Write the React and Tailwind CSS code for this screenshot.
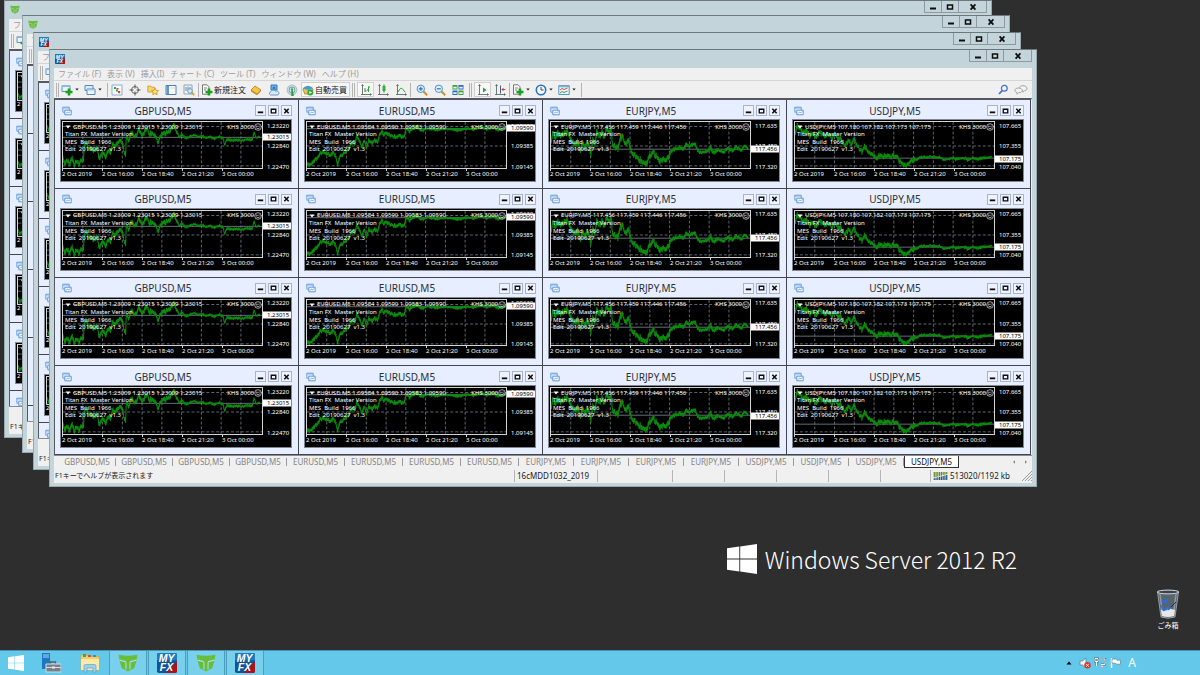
import React from "react";

const MARKETS = [
  {
    name: "GBPUSD,M5",
    ohlc: "1.23009 1.23015 1.23009 1.23015",
    axis: ["1.23220", "1.22840", "1.22470"],
    bid: "1.23015",
    bidY: 48,
    origin: 38,
    points:
      "38,170 42,195 50,180 57,193 66,175 72,198 80,182 86,195 92,178 100,180 104,130 108,120 116,150 124,140 132,155 140,145 150,178 156,160 163,165 168,170 174,150 182,155 190,130 196,140 204,125 212,120 220,130 224,160 228,162 230,110 238,120 246,95 254,105 262,100 268,85 276,105 284,95 292,82 300,100 310,95 320,110 328,128 334,105 344,100 352,95 362,90 370,78 376,70 382,90 390,107 400,103 412,112 424,107 436,102 448,108 460,105 472,112 484,108 496,115 510,108 524,112 528,135 536,115 550,120 564,118 580,120 596,116 612,118 618,95 624,112 635,108",
    noise: [10, 3],
  },
  {
    name: "EURUSD,M5",
    ohlc: "1.09584 1.09590 1.09583 1.09590",
    axis: ["1.09630", "1.09385", "1.09145"],
    bid: "1.09590",
    bidY: 21,
    origin: 34,
    points:
      "34,190 40,197 50,190 58,180 66,175 74,160 84,155 95,160 104,165 114,158 122,170 127,200 132,175 140,165 150,158 160,150 166,130 172,125 180,128 186,105 192,120 200,138 208,120 214,140 222,118 230,128 240,120 248,125 254,100 262,90 266,105 276,95 286,105 300,108 316,105 328,112 334,85 346,90 358,80 370,76 380,88 400,82 430,86 460,83 490,88 520,83 545,85 560,76 580,84 600,78 615,88 636,80",
    noise: [8, 3],
  },
  {
    name: "EURJPY,M5",
    ohlc: "117.456 117.459 117.446 117.456",
    axis: ["117.635", "117.480", "117.320"],
    bid: "117.456",
    bidY: 85,
    origin: 29,
    points:
      "30,120 34,100 42,110 50,95 58,105 68,100 78,90 86,105 94,125 102,130 110,125 118,150 124,130 134,140 142,125 150,165 156,120 162,130 168,90 176,105 184,95 192,110 198,80 206,95 212,85 216,130 224,140 232,145 238,120 246,105 254,128 264,120 272,155 282,165 290,175 298,180 308,185 316,197 324,180 332,165 340,158 350,170 360,185 370,178 380,180 390,160 400,148 410,145 420,140 430,145 440,132 450,138 464,128 474,150 484,160 496,155 510,150 514,140 522,160 536,148 550,158 564,145 580,150 592,140 605,150 618,138 628,148",
    noise: [12, 8],
  },
  {
    name: "USDJPY,M5",
    ohlc: "107.180 107.182 107.173 107.175",
    axis: ["107.665", "107.355", "107.040"],
    bid: "107.175",
    bidY: 113,
    origin: 25,
    points:
      "26,95 32,75 40,80 50,95 60,90 70,105 80,95 90,110 98,90 106,100 116,105 126,100 136,115 146,100 154,115 162,108 170,125 178,135 186,120 196,130 204,115 212,130 220,145 228,155 236,140 246,152 256,160 266,172 272,175 280,168 292,170 304,165 314,172 324,168 334,172 344,185 354,195 364,198 374,185 384,180 396,180 406,170 420,172 436,170 450,172 464,172 480,182 500,175 520,178 536,174 550,180 566,175 580,178 600,173 614,174 624,170",
    noise: [10, 4],
  },
];

const TIMES = ["2 Oct 2019", "2 Oct 16:00", "2 Oct 18:40", "2 Oct 21:20", "3 Oct 00:00"];
const MENUS = ["ファイル (F)", "表示 (V)", "挿入(I)", "チャート (C)", "ツール (T)", "ウィンドウ (W)", "ヘルプ (H)"];

// Interpolates between price anchors and adds a repeatable jitter per bar.
function buildPath(market) {
  const anchors = market.points.split(" ").map((p) => p.split(",").map(Number));
  let seed = 17;
  const random = () => {
    seed = (seed * 1103515245 + 12345) % 2147483648;
    return seed / 2147483648 - 0.5;
  };
  let d = "";
  for (let i = 0; i < anchors.length - 1; i++) {
    const [x0, y0] = anchors[i];
    const [x1, y1] = anchors[i + 1];
    for (let x = x0; x < x1; x += 2) {
      const y = y0 + ((y1 - y0) * (x - x0)) / (x1 - x0);
      const amp = x < 390 ? market.noise[0] : market.noise[1];
      const n = random() * amp;
      d += `${d ? "L" : "M"}${x - market.origin} ${(y - 62 + n - amp / 2).toFixed(1)}V${(y - 62 + n + amp / 2).toFixed(1)}`;
    }
  }
  return d;
}
const PATHS = MARKETS.map(buildPath);

function Plot({ index }) {
  const m = MARKETS[index];
  return (
    <svg viewBox="0 0 604 143" preserveAspectRatio="none" className="block h-full w-full" aria-hidden="true">
      {[14, 75, 137].map((y) => (
        <path key={y} d={`M0 ${y}H604`} stroke="#76828e" strokeWidth="2.4" strokeDasharray="9 6" />
      ))}
      {[60, 120, 180, 240, 300, 360, 420, 480, 540].map((x) => (
        <path key={x} d={`M${x} 0V143`} stroke="#76828e" strokeWidth="2.4" strokeDasharray="9 6" />
      ))}
      <path d={`M0 ${m.bidY}H604`} stroke="#7c8894" strokeWidth="2.5" />
      <path d={PATHS[index]} fill="none" stroke="#088c0a" strokeWidth="3.2" />
    </svg>
  );
}

function Smile() {
  return (
    <svg viewBox="0 0 8 8" className="h-2 w-2" fill="none" stroke="#e8e8e8" strokeWidth="0.7" aria-hidden="true">
      <circle cx="4" cy="4" r="3.3" />
      <path d="M2.2 4.8Q4 6.6 5.8 4.8M2.8 2.5v1M5.2 2.5v1" />
    </svg>
  );
}

function Caret({ className = "h-1 w-1.5" }) {
  return (
    <svg viewBox="0 0 6 4" className={className} fill="currentColor" aria-hidden="true">
      <path d="M0.5 0.5h5L3 3.5z" />
    </svg>
  );
}

function ChartGlyph() {
  return (
    <svg viewBox="0 0 10 10" className="h-2.5 w-2.5" aria-hidden="true">
      <path d="M0.8 1.2h6.4v5H0.8z" fill="#dcebff" stroke="#6fa3dd" />
      <path d="M0.5 1h7v1.4h-7z" fill="#7fb0e6" />
      <path d="M2.8 4.2h6.4v4.6H2.8z" fill="#fff" stroke="#5e98d8" />
      <path d="M4 7.6l1.5-1.6 1.2 1 1.5-1.6" fill="none" stroke="#5e98d8" strokeWidth="0.9" />
    </svg>
  );
}

function CtlGlyph({ kind }) {
  return (
    <svg viewBox="0 0 10 10" className="h-2.5 w-2.5" fill="none" stroke="#0c0c0c" aria-hidden="true">
      {kind === "min" && <path d="M2 6.5h6" strokeWidth="2" />}
      {kind === "max" && <path d="M2.5 3h5v4h-5zM2 3h6" strokeWidth="1.5" />}
      {kind === "close" && <path d="M2.6 2.4l4.8 5.2M7.4 2.4L2.6 7.6" strokeWidth="1.7" />}
    </svg>
  );
}

const CONTROL_NAMES = [
  ["min", "最小化"],
  ["max", "最大化"],
  ["close", "閉じる"],
];

function ChartWindow({ index }) {
  const m = MARKETS[index];
  return (
    <section className="flex min-h-0 min-w-0 flex-col overflow-hidden border-r border-b border-[#44464f] bg-[#e6eeff] pr-1.5 pb-1.5 pl-[5px] font-['Noto_Sans','Open_Sans',sans-serif]">
      <header className="grid h-[19px] shrink-0 grid-cols-[12px_1fr_38px] items-center pt-0.5">
        <span className="pl-0.5">
          <ChartGlyph />
        </span>
        <h2 className="text-center text-[10px] leading-3 text-[#2c2f38]">{m.name}</h2>
        <span className="flex justify-end gap-0.5">
          {CONTROL_NAMES.map(([kind, label]) => (
            <button
              key={kind}
              aria-label={`${m.name} ${label}`}
              className="flex h-[11px] w-[11px] items-center justify-center border border-[#a9b3cb] bg-[#eef3ff]"
            >
              <CtlGlyph kind={kind} />
            </button>
          ))}
        </span>
      </header>
      <div className="flex min-h-0 flex-1 flex-col border border-[#808790] bg-black text-[6px] leading-[7px] text-white">
        <div className="flex min-h-0 flex-1 pt-px pl-px">
          <div className="relative flex-1 border border-[#d4d4d4]">
            <div className="absolute inset-0">
              <Plot index={index} />
            </div>
            <div className="relative flex flex-col pt-px pl-0.5">
              <p className="flex items-center gap-0.5 whitespace-pre">
                <Caret className="h-1 w-1.5" />
                <span className="flex-1">
                  {m.name} {m.ohlc}
                </span>
                <span>KHS 3000</span>
                <span className="-ml-0.5">
                  <Smile />
                </span>
              </p>
              <p className="whitespace-pre">Titan FX  Master Version</p>
              <p className="whitespace-pre pt-px">MES  Build  1966</p>
              <p className="whitespace-pre">Edit  20190627  v1.3</p>
            </div>
          </div>
          <div className="relative w-7 shrink-0">
            {m.axis.map((price, i) => (
              <span
                key={price}
                className="absolute left-1 -translate-y-1/2"
                style={{ top: `${([14, 75, 137][i] / 143) * 100}%` }}
              >
                {price}
              </span>
            ))}
            <span
              className="absolute left-0 w-full -translate-y-1/2 bg-white pl-1 text-black"
              style={{ top: `${(m.bidY / 143) * 100}%` }}
            >
              {m.bid}
            </span>
          </div>
        </div>
        <ol className="flex h-3 shrink-0 pr-7 pl-px">
          {TIMES.map((t) => (
            <li key={t} className="w-10 shrink-0 whitespace-nowrap">
              <span className="block h-0.5 w-px bg-[#d4d4d4]" />
              {t}
            </li>
          ))}
        </ol>
      </div>
    </section>
  );
}

// Edge of a chart in a terminal that lies behind another one.
function ChartEdge() {
  return (
    <section className="col-start-1 flex flex-col border-r border-b border-[#44464f] bg-[#e6eeff] pr-1.5 pb-1.5 pl-[5px] font-['Noto_Sans','Open_Sans',sans-serif]">
      <header className="flex h-[19px] shrink-0 items-center pt-0.5 pl-px">
        <ChartGlyph />
      </header>
      <div className="flex min-h-0 flex-1 flex-col border border-[#808790] bg-black pt-px pl-px text-[6px] leading-[7px] text-white">
        <div className="relative min-h-0 flex-1 border border-[#d4d4d4]">
          <div className="absolute inset-0">
            <Plot index={0} />
          </div>
          <Caret className="relative mt-0.5 ml-0.5 h-1 w-1.5" />
        </div>
        <span className="h-2.5">2</span>
      </div>
    </section>
  );
}

function TitanLogo({ className }) {
  return (
    <svg viewBox="0 0 24 22" className={className} aria-hidden="true">
      <path d="M0.500 1Q12 3.500 23.500 1L22.500 8 19.500 17.500 12 21.500 4.500 17.500 1.500 8z" fill="#69bd3c" />
      <path d="M1.500 7.500L8 9q1.500 .5 1.500 2v8M22.500 7.500L16 9q-1.500 .5-1.500 2v8" fill="none" stroke="currentColor" strokeWidth="1.300" />
    </svg>
  );
}

function MyFxLogo({ className }) {
  return (
    <svg viewBox="0 0 22 22" className={className} aria-hidden="true">
      <rect width="22" height="22" rx="2" fill="#10559a" />
      <path d="M2 0h18a2 2 0 0 1 2 2v6H0V2a2 2 0 0 1 2-2z" fill="#2079bb" />
      <path d="M22 9v11a2 2 0 0 1-2 2H9z" fill="#a8141c" />
      <text x="10.500" y="10.300" textAnchor="middle" fontFamily="Liberation Sans" fontWeight="700" fontStyle="italic" fontSize="11.500" fill="#fff">MY</text>
      <text x="10.500" y="20" textAnchor="middle" fontFamily="Liberation Sans" fontWeight="700" fontStyle="italic" fontSize="11.500" fill="#fff">FX</text>
    </svg>
  );
}

const PLUS = <path d="M8 4.500v7M4.500 8h7" stroke="#17a022" strokeWidth="2.600" />;
const AXES = <path d="M2.500 1v9.500M1 10.500h10M1.500 2l1-1.500 1 1.500M10 9.500l1.500 1-1.500 1" stroke="#4e5a55" fill="none" strokeWidth=".8" />;
const ICONS = {
  newChart: (
    <>
      <path d="M1 1.500h8v6H1z" fill="#e8f2fc" stroke="#5f94c4" />
      <path d="M1 1h8v2H1z" fill="#8fb8de" />
      {PLUS}
    </>
  ),
  profiles: (
    <>
      <path d="M1 1.500h8v5H1z" fill="#dcebfa" stroke="#5588bd" />
      <path d="M3 5h8v5.500H3z" fill="#eef6fd" stroke="#5588bd" />
      <path d="M3 5h8v1.500H3z" fill="#9dc1e4" />
    </>
  ),
  market: (
    <>
      <path d="M1 1h10v10H1z" fill="#fdfefe" stroke="#7fb0d8" />
      <path d="M3 3h2v2H3zM5 5.500h2v2H5z" fill="#2faa3c" />
      <path d="M5.500 4h2v1.500h-2zM7 7h2.200v2.200H7z" fill="#d8432f" />
    </>
  ),
  cross: (
    <>
      <circle cx="6" cy="6" r="3.500" fill="none" stroke="#666" />
      <path d="M6 0.500v4M6 7.500v4M.5 6h4M7.500 6h4" stroke="#555" />
    </>
  ),
  navigator: (
    <>
      <path d="M.8 2h3l1 1.200h3V8h-7z" fill="#f5d66a" stroke="#c79a2b" strokeWidth=".8" />
      <path d="M8 4.200l1.100 2.100 2.400.3-1.700 1.700.4 2.400L8 9.600l-2.200 1.100.4-2.400-1.700-1.700 2.400-.3z" fill="#ffe062" stroke="#c4932a" strokeWidth=".8" />
    </>
  ),
  terminal: (
    <>
      <path d="M1 1.500h10v9H1z" fill="#fff" stroke="#4b80b5" />
      <path d="M1.500 2h2.500v8H1.500z" fill="#5f95cf" />
      <path d="M5 4h5" stroke="#c8d8ea" />
    </>
  ),
  tester: (
    <>
      <path d="M1 1h8v9H1z" fill="#f2f7fb" stroke="#8aa3ba" />
      <path d="M3 3v4M5 2.500v4M7 3v3" stroke="#5a86b0" />
      <circle cx="7" cy="7" r="2.300" fill="#d7eafa" stroke="#6d9cc5" />
      <path d="M8.700 8.700l2.500 2.500" stroke="#d69a28" strokeWidth="1.700" />
    </>
  ),
  order: (
    <>
      <path d="M1.500 .8h4.500l2 2v7.400H1.500z" fill="#fafafa" stroke="#777" />
      <path d="M3 4h3M3 6h2" stroke="#888" />
      {PLUS}
    </>
  ),
  gold: (
    <>
      <path d="M1 6l4-4 6 4-4 4z" fill="#f5c54b" stroke="#b67b17" strokeWidth=".8" />
      <path d="M1 6v1.500l6 3.800V10zM7 11.300l4-4V6L7 10z" fill="#c98b1c" />
    </>
  ),
  cloud: (
    <>
      <path d="M3 1h6v5H3z" fill="#6fb7ec" stroke="#2f77bd" />
      <path d="M6 2.500v3M4.500 4h3" stroke="#2566ae" />
      <path d="M2.500 11a1.800 1.800 0 0 1 .3-3.400 2.600 2.600 0 0 1 4.600-.3A2 2 0 0 1 10 11z" fill="#dbe9f7" stroke="#5f91c6" strokeWidth=".9" />
    </>
  ),
  signal: (
    <>
      <circle cx="6" cy="6" r="4.800" fill="#e3ecee" stroke="#aac3c9" strokeWidth="1.200" />
      <circle cx="6" cy="6" r="2.900" fill="none" stroke="#7da7b2" strokeWidth="1.100" />
      <path d="M6 5l1 6.500H6z" stroke="#2f9f46" strokeWidth="1.500" />
      <circle cx="6" cy="5.500" r="1.300" fill="#44ae57" />
    </>
  ),
  auto: (
    <>
      <path d="M.8 5L6 2l5.200 3-1.500 5h-7z" fill="#ecc24c" stroke="#b08322" strokeWidth=".8" />
      <path d="M1 4.500C2 1 10 1 11 4.500L6 6z" fill="#4a9bd5" />
      <circle cx="8.300" cy="8.500" r="3" fill="#27ab3c" />
      <path d="M7.400 6.900v3.200l2.600-1.600z" fill="#fff" />
    </>
  ),
  bars: (
    <>
      {AXES}
      <path d="M5 8V4M5 7h1.500M8.500 8V2.500M8.500 3H10M7 6h1.500" stroke="#28a337" />
    </>
  ),
  candles: (
    <>
      {AXES}
      <path d="M7 .5v8" stroke="#178a28" />
      <path d="M5.500 2h3v5h-3z" fill="#2cb440" />
    </>
  ),
  line: (
    <>
      {AXES}
      <path d="M3 8q3-6 5-2.500 1 2 2.500 2.500" fill="none" stroke="#28a337" />
    </>
  ),
  zoomIn: (
    <>
      <path d="M7.500 7.500l3.700 3.700" stroke="#c79429" strokeWidth="2" />
      <circle cx="4.800" cy="4.800" r="3.700" fill="#dff0fd" stroke="#4b8fce" />
      <path d="M2.800 4.800h4M4.800 2.800v4" stroke="#2e70b5" strokeWidth="1.200" />
    </>
  ),
  zoomOut: (
    <>
      <path d="M7.500 7.500l3.700 3.700" stroke="#c79429" strokeWidth="2" />
      <circle cx="4.800" cy="4.800" r="3.700" fill="#dff0fd" stroke="#4b8fce" />
      <path d="M2.800 4.800h4" stroke="#2e70b5" strokeWidth="1.200" />
    </>
  ),
  tile: (
    <>
      <path d="M.5 1h5v4.500h-5zM6.500 6.500h5V11h-5z" fill="#3aa33f" />
      <path d="M6.500 1h5v4.500h-5zM.5 6.500h5V11h-5z" fill="#2f6bc4" />
      <path d="M1.300 2.800h3.400v1.700H1.300zM7.300 2.800h3.400v1.700H7.300zM1.300 8.300h3.400V10H1.300zM7.300 8.300h3.400V10H7.300z" fill="#e4f1e8" />
    </>
  ),
  scroll: (
    <>
      {AXES}
      <path d="M6 3.500v5l3.500-2.500z" fill="#27a338" />
    </>
  ),
  shift: (
    <>
      {AXES}
      <path d="M6.500 1.500v8" stroke="#3a5e90" />
      <path d="M11.500 5.500H8M9.500 4L8 5.500 9.500 7" fill="none" stroke="#d1492b" />
    </>
  ),
  clock: (
    <>
      <circle cx="6" cy="6" r="4.700" fill="#f2f8fe" stroke="#2b72c2" strokeWidth="1.600" />
      <path d="M6 3v3h2.500" fill="none" stroke="#444" />
    </>
  ),
  template: (
    <>
      <path d="M.8 1.500h10.400v9H.8z" fill="#eef6fd" stroke="#5a8fc2" />
      <path d="M.8 1.500h10.400v1.800H.8z" fill="#7fb0dc" />
      <path d="M2 6l2-1.500 2 1 3.500-1.500" fill="none" stroke="#cc5140" />
      <path d="M2 9l2-1.500 2 1L9.500 7" fill="none" stroke="#2f9f46" />
    </>
  ),
  search: (
    <>
      <circle cx="7.300" cy="4.300" r="2.900" fill="#eef4ff" stroke="#3f6fd0" strokeWidth="1.200" />
      <path d="M5.200 6.600L2 10" stroke="#3f6fd0" strokeWidth="1.700" />
    </>
  ),
};

function Icon({ name }) {
  return (
    <svg viewBox="0 0 12 12" className="h-3 w-3 shrink-0" aria-hidden="true">
      {ICONS[name]}
    </svg>
  );
}

function Tool({ name, label, menu, pressed }) {
  return (
    <button
      aria-label={label}
      aria-pressed={pressed}
      className={
        menu
          ? "flex h-full w-[23px] items-center gap-0.5 text-[#222]"
          : pressed
            ? "flex h-full w-[17px] items-center justify-center border border-[#cfcfcf] bg-[#f8f8f8]"
            : "flex h-full w-[18px] items-center justify-center"
      }
    >
      <Icon name={name} />
      {menu && <Caret className="h-[3px] w-1" />}
    </button>
  );
}

const Grip = () => <span className="mx-0.5 h-3.5 w-[3px] border-x border-[#b4b4b4]" />;
const Rule = () => <span className="h-3.5 w-px bg-[#b4b4b4]" />;

function Toolbar({ full }) {
  return (
    <div className="flex h-[18px] shrink-0 items-center border-t border-[#d5d5d5] bg-[#f0f0f0] py-px">
      <Grip />
      <Tool name="newChart" label="新規チャート" menu />
      {full && (
        <>
          <Tool name="profiles" label="プロファイル" menu />
          <Rule />
          <Tool name="market" label="気配値表示" />
          <Tool name="cross" label="データウィンドウ" />
          <Tool name="navigator" label="ナビゲーター" />
          <Tool name="terminal" label="ターミナル" />
          <Tool name="tester" label="ストラテジーテスター" />
          <Rule />
          <button className="flex h-full items-center gap-px pr-px pl-0.5 text-[8px] leading-3 text-[#111]">
            <Icon name="order" />
            新規注文
          </button>
          <Tool name="gold" label="MetaEditor" />
          <Tool name="cloud" label="クラウド" />
          <Tool name="signal" label="シグナル" />
          <button
            aria-pressed="true"
            className="flex h-full items-center gap-px border border-[#cfcfcf] bg-[#f8f8f8] pr-0.5 text-[8px] leading-3 text-[#111]"
          >
            <Icon name="auto" />
            自動売買
          </button>
          <Grip />
          <Tool name="bars" label="バーチャート" pressed />
          <Tool name="candles" label="ローソク足" />
          <Tool name="line" label="ラインチャート" />
          <Rule />
          <span className="w-0.5" />
          <Tool name="zoomIn" label="拡大" />
          <Tool name="zoomOut" label="縮小" />
          <Tool name="tile" label="整列" />
          <Grip />
          <Tool name="scroll" label="自動スクロール" pressed />
          <Tool name="shift" label="チャートシフト" />
          <Rule />
          <span className="w-0.5" />
          <Tool name="order" label="インディケータリスト" menu />
          <Tool name="clock" label="時間足設定" menu />
          <Tool name="template" label="定型チャート" menu />
          <Rule />
          <span className="ml-auto flex h-full items-center gap-0.5 pr-1">
            <Tool name="search" label="検索" />
            <button aria-label="チャット" className="flex items-center">
              <svg viewBox="0 0 14 10" className="h-2.5 w-3.5" fill="#f4f4f4" stroke="#a2a2a2" aria-hidden="true">
                <path d="M9 .7c5 0 5 5 1.500 5L9 7.200V5.700C4 5.700 4 .7 9 .7z" />
                <path d="M4.500 3c5 0 5 4.700 0 4.700L3 9.200V7.400C0 7 0 3 4.500 3z" />
              </svg>
            </button>
          </span>
        </>
      )}
    </div>
  );
}

function Tabs() {
  const tabs = [0, 1, 2, 3].flatMap((i) => [i, i, i, i]);
  const widths = ["w-[57px]", "w-[58px]", "w-[55px]", "w-[55px]"];
  return (
    <>
      {tabs.map((t, i) =>
        i === 15 ? (
          <button
            key={i}
            className="h-3 w-[55px] border border-t-0 border-[#333] bg-white text-center leading-[11px] text-[#111]"
          >
            {MARKETS[t].name}
          </button>
        ) : (
          <button key={i} className={`flex h-3 items-center ${widths[t]}`}>
            <span className="flex-1">{MARKETS[t].name}</span>
            <span className="h-2 w-px bg-[#9a9a9a]" />
          </button>
        ),
      )}
      <span className="ml-auto flex h-3 items-center gap-2 pr-1 text-[#888]">
        <button aria-label="前のタブ">
          <Caret className="h-1 w-1 rotate-90" />
        </button>
        <button aria-label="次のタブ">
          <Caret className="h-1 w-1 -rotate-90" />
        </button>
      </span>
    </>
  );
}

function StatusCells() {
  return (
    <>
      <span className="w-[83px] border-l border-[#b5b5b5] pl-0.5 text-[8px]">16cMDD1032_2019</span>
      <span className="h-3 w-[75px] border-l border-[#b5b5b5]" />
      {[0, 1, 2, 3].map((i) => (
        <span key={i} className="h-3 w-[52px] border-l border-[#b5b5b5]" />
      ))}
      <span className="h-3 w-[50px] border-l border-[#b5b5b5]" />
      <span className="flex h-3 w-[102px] items-center gap-0.5 border-l border-[#b5b5b5] pl-0.5 text-[8px]">
        <svg viewBox="0 0 15 9" className="h-2 w-[15px]" aria-hidden="true">
          {[0, 2, 4, 6, 8, 10, 12, 14].map((x) => (
            <g key={x}>
              <path d={`M${x + 0.5} 0V${6 - x / 4}`} stroke="#6b8a2c" strokeWidth="1.4" />
              <path d={`M${x + 0.5} ${7 - x / 4}V9`} stroke="#235a78" strokeWidth="1.4" />
            </g>
          ))}
        </svg>
        <span className="flex-1 whitespace-nowrap">513020/1192 kb</span>
        <svg viewBox="0 0 10 10" className="h-2.5 w-2.5" stroke="#9a9a9a" aria-hidden="true">
          <path d="M0 10L10 0M3 10l7-7M6 10l4-4M9 10l1-1" />
        </svg>
      </span>
    </>
  );
}

function Terminal({ place, logo, full }) {
  return (
    <section
      className={`absolute flex h-[438px] w-[988px] flex-col border border-[#98a8ae] border-t-[#6d787d] bg-[#c3d5da] px-1 pb-[3px] font-['Noto_Sans','Noto_Sans_CJK_JP',sans-serif] ${place}`}
    >
      <header className="flex h-[18px] shrink-0 items-start justify-between pl-px">
        {logo}
        <div className="flex">
          {CONTROL_NAMES.map(([kind, label], i) => (
            <button
              key={kind}
              aria-label={label}
              className={
                i === 2
                  ? "flex h-3 w-[29px] items-center justify-center border-x border-b border-[#8c9aa0]"
                  : "flex h-3 w-[17px] items-center justify-center border-b border-l border-[#8c9aa0]"
              }
            >
              <CtlGlyph kind={kind} />
            </button>
          ))}
        </div>
      </header>
      <nav className="flex h-3 shrink-0 items-center gap-1.5 bg-[#f0f0f0] pl-1 text-[8px] leading-3 text-[#9b9b9b]">
        {(full ? MENUS : MENUS.slice(0, 1)).map((m) => (
          <button key={m} className="whitespace-nowrap">
            {m}
          </button>
        ))}
      </nav>
      <Toolbar full={full} />
      <main
        className={
          full
            ? "grid min-h-0 flex-1 grid-cols-4 grid-rows-4 overflow-hidden border-t-2 border-r border-l border-[#55585e] border-r-[#f0f0f0]"
            : "grid min-h-0 flex-1 auto-rows-[68px] grid-cols-4 overflow-hidden border-t-2 border-l border-[#55585e] bg-[#e6eeff]"
        }
      >
        {full
          ? [0, 1, 2, 3].flatMap((row) => [0, 1, 2, 3].map((i) => <ChartWindow key={`${row}-${i}`} index={i} />))
          : [0, 1, 2, 3, 4, 5].map((row) => <ChartEdge key={row} />)}
      </main>
      <div className="flex h-3.5 shrink-0 items-start border-t border-[#8a8c90] bg-[#f0f0f0] pl-1">
        <div className="flex flex-1 pl-px text-[8px] leading-3 text-[#858585]">{full && <Tabs />}</div>
      </div>
      <footer className="flex h-3.5 shrink-0 items-center bg-[#f0f0f0] text-[7px] leading-3 text-[#222]">
        <span className="flex-1 whitespace-nowrap pl-px">F1キーでヘルプが表示されます</span>
        {full && <StatusCells />}
      </footer>
    </section>
  );
}

function WindowsLogo({ className }) {
  return (
    <svg viewBox="0 0 30 30" className={className} fill="#fff" aria-hidden="true">
      <path d="M0 4.200L12.300 2.500v12H0zM13.200 2.400L30 0v14.500H13.200zM0 15.400h12.300v12L0 25.700zM13.200 15.400H30V30l-16.800-2.400z" />
    </svg>
  );
}

function Taskbar() {
  return (
    <footer className="flex h-[25px] shrink-0 items-center border-t border-[#4b93ae] bg-[#64c8ea]">
      <button aria-label="スタート" className="flex w-8 justify-center">
        <WindowsLogo className="h-4 w-4" />
      </button>
      <button aria-label="サーバー マネージャー" className="flex w-[38px] justify-center">
        <svg viewBox="0 0 20 20" className="h-5 w-5" aria-hidden="true">
          <path d="M1 0h8v16H1z" fill="#1c78c0" />
          <path d="M2 2h6M2 4h6" stroke="#a7d8f4" />
          <path d="M9.500 11V9h5v2" fill="none" stroke="#54606a" strokeWidth="1.300" />
          <path d="M5 11h15v8H5z" fill="#74818c" stroke="#d4dde4" />
          <path d="M5 14.500h15" stroke="#d4dde4" />
          <path d="M11 13.500h3v2h-3z" fill="#eee" />
        </svg>
      </button>
      <button aria-label="エクスプローラー" className="flex w-[39px] justify-center">
        <svg viewBox="0 0 20 20" className="h-5 w-5" aria-hidden="true">
          <path d="M1 2h6l1.500 1.500H19V17H1z" fill="#f0cf72" stroke="#d1a848" strokeWidth=".7" />
          <path d="M3 1h3v3H3z" fill="#3aa848" />
          <path d="M8 2h3v2H8z" fill="#d34f3e" />
          <path d="M13 2h3v2h-3z" fill="#3d88cf" />
          <path d="M1 6h18v11H1z" fill="#fae9a9" />
          <path d="M4 19v-6q0-1.500 1.500-1.500h9q1.500 0 1.500 1.500v6h-3v-4H7v4z" fill="#9cd0ee" stroke="#5fa3cb" strokeWidth=".7" />
        </svg>
      </button>
      <div className="flex h-full gap-px">
        {[0, 1, 2, 3].map((i) => (
          <button
            key={i}
            aria-label={i % 2 ? "MYFX" : "Titan FX"}
            className="flex h-full w-[38px] items-center justify-center border-x border-[#4a9fbd] bg-[#78d0ec] text-[#a5dfe0]"
          >
            {i % 2 ? <MyFxLogo className="h-5 w-5" /> : <TitanLogo className="h-[18px] w-5" />}
          </button>
        ))}
      </div>
      <div className="ml-auto flex items-center gap-[3px] pr-16">
        <button aria-label="隠れているインジケーター" className="mr-1 text-black">
          <Caret className="h-1 w-1.5 rotate-180" />
        </button>
        <button aria-label="音量">
          <svg viewBox="0 0 12 12" className="h-3 w-3" aria-hidden="true">
            <path d="M1 4h2.500L7 1v10L3.500 8H1z" fill="#f5f5f5" stroke="#5d7884" strokeWidth=".7" />
            <circle cx="8.500" cy="8.300" r="3.200" fill="#de3325" />
            <path d="M7.200 7l2.600 2.600M9.800 7L7.200 9.600" stroke="#fff" />
          </svg>
        </button>
        <button aria-label="ネットワーク">
          <svg viewBox="0 0 12 12" className="h-3 w-3" fill="none" aria-hidden="true">
            <path d="M4.500 2h6.500v5.500h-4M5.500 10h4.500M8 7.500V10" stroke="#4a7484" strokeWidth="2" />
            <path d="M4.500 2h6.500v5.500h-4M5.500 10h4.500M8 7.500V10" stroke="#eef8fb" />
            <path d="M1 1.500h3v3H1zM2.500 4.500V9" stroke="#4a7484" strokeWidth="2" />
            <path d="M1 1.500h3v3H1zM2.500 4.500V9" stroke="#eef8fb" />
          </svg>
        </button>
        <button aria-label="アクション センター">
          <svg viewBox="0 0 12 12" className="h-3 w-3" aria-hidden="true">
            <path d="M2.500 1v10" stroke="#fff" strokeWidth="1.500" />
            <path d="M3 2h4l1 1.200h3.500v4H7.500L6.500 6.200H3z" fill="#fff" stroke="#4d7786" strokeWidth=".6" />
          </svg>
        </button>
        <button
          aria-label="入力モード A"
          className="ml-1 font-['Noto_Sans',sans-serif] text-[12px] leading-3 text-white"
        >
          A
        </button>
      </div>
    </footer>
  );
}

export default function App() {
  return (
    <div className="flex h-screen flex-col overflow-hidden bg-[#2e2e2e]">
      <div className="relative min-h-0 flex-1 overflow-hidden">
        <Terminal place="left-1 top-0 text-[#c3d5da]" logo={<TitanLogo className="mt-1 h-[9px] w-2.5" />} />
        <Terminal place="left-[22px] top-[15px] text-[#c3d5da]" logo={<TitanLogo className="mt-1 h-[9px] w-2.5" />} />
        <Terminal place="left-[33px] top-8" logo={<MyFxLogo className="mt-1 h-2.5 w-2.5" />} />
        <Terminal place="left-[49px] top-[49px]" logo={<MyFxLogo className="mt-1 h-2.5 w-2.5" />} full />

        <div className="absolute top-[544px] right-[183px] flex items-center gap-2 text-white">
          <WindowsLogo className="h-[30px] w-[30px]" />
          <p className="font-['Noto_Sans_CJK_JP',sans-serif] text-[23px] leading-[30px] font-light whitespace-nowrap">
            Windows Server 2012 R2
          </p>
        </div>

        <button className="absolute top-[589px] right-5 flex flex-col items-center font-['Noto_Sans_CJK_JP',sans-serif] text-[7px] leading-3 text-white">
          <svg viewBox="0 0 24 30" className="h-[30px] w-6" aria-hidden="true">
            <path d="M1.500 3L5 28q7 2.500 14 0L22.500 3z" fill="#59636c" stroke="#aab4bc" strokeWidth=".8" />
            <path d="M4 5l2.500 20M20 5l-2.500 20" stroke="#8e99a3" strokeWidth="1.500" />
            <path d="M5 21q7-3 14 0l-.8 6q-6.200 2-12.400 0z" fill="#e6e8ea" />
            <path d="M6 13l4-2 1 4M5.500 16l2 5 4-1M12 17l1 4" fill="none" stroke="#2870d8" strokeWidth="2" />
            <path d="M20 13l-5 5" stroke="#2b3035" />
            <ellipse cx="12" cy="3" rx="10.800" ry="1.900" fill="#3c444b" stroke="#d5dadd" />
          </svg>
          ごみ箱
        </button>
      </div>
      <Taskbar />
    </div>
  );
}
